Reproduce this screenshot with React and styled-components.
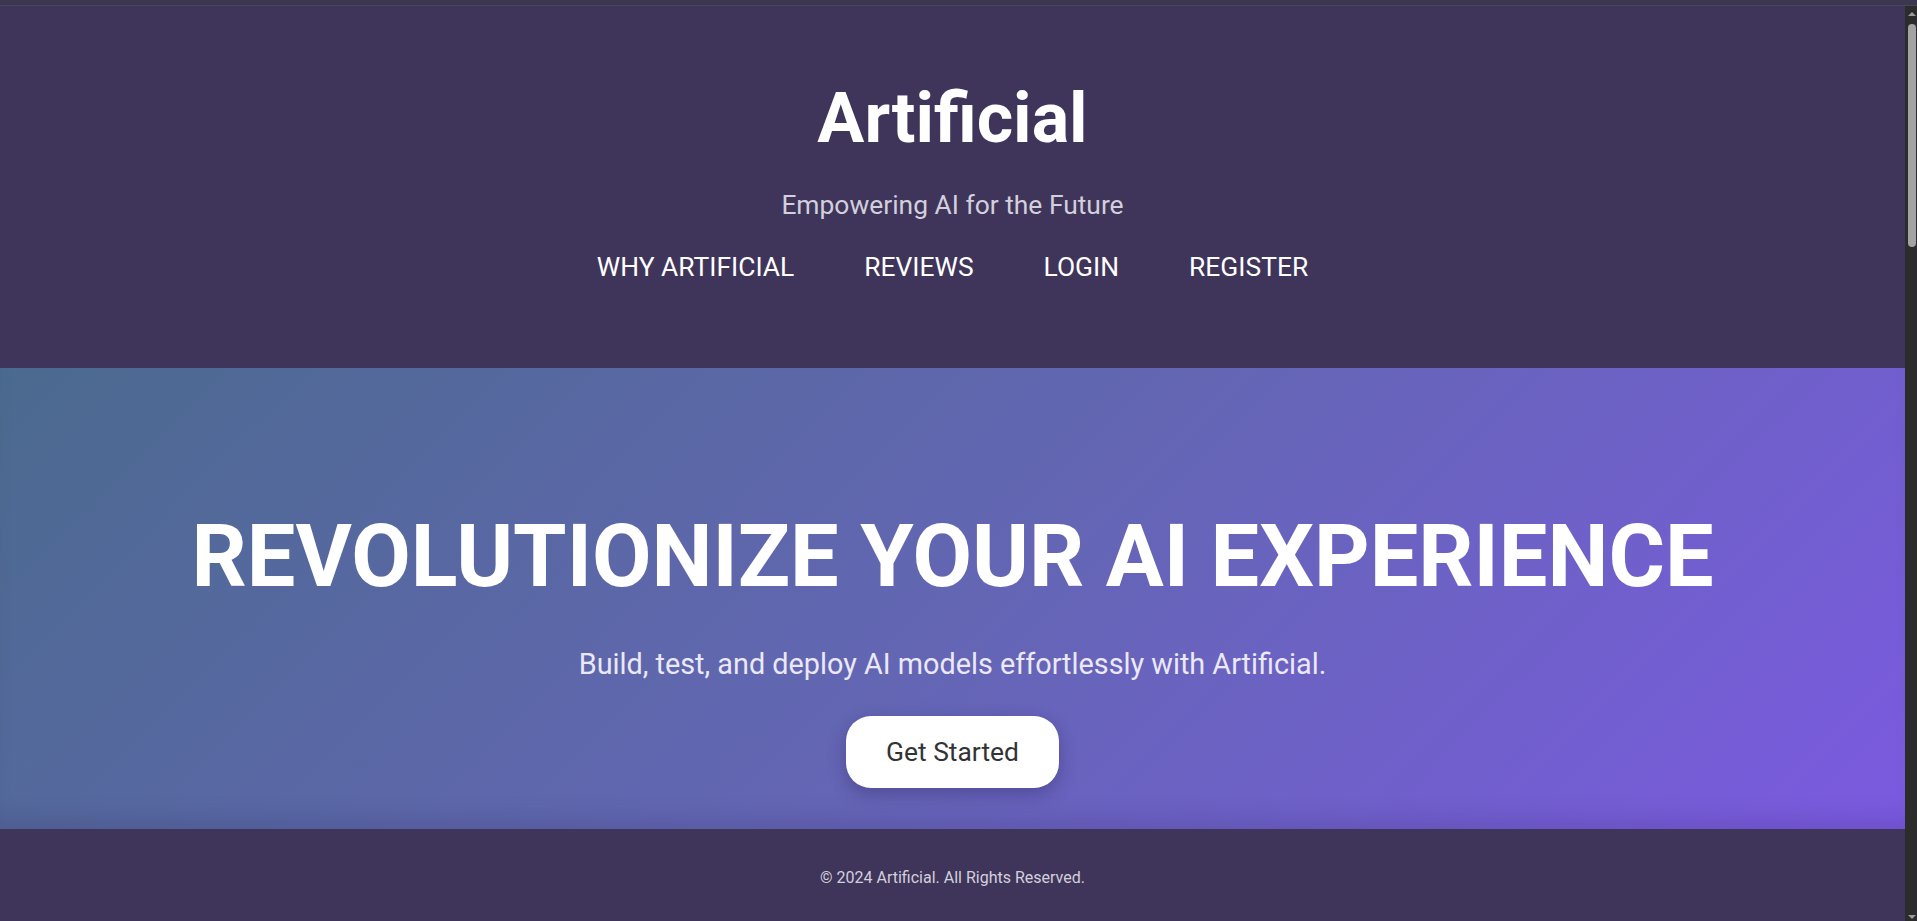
import React from "react";
import styled, { createGlobalStyle } from "styled-components";

const GlobalStyle = createGlobalStyle`
  html, body {
    margin: 0;
    padding: 0;
    height: 100%;
    overflow: hidden;
    background: #3f355b;
    font-family: Roboto, "Liberation Sans", sans-serif;
  }
  #root {
    height: 100%;
  }
`;

const Frame = styled.div`
  height: 100%;
  display: flex;
  flex-direction: column;
`;

const TopStrip = styled.div`
  height: 5px;
  flex-shrink: 0;
  background: #3a374e;
  border-bottom: 1px solid #4a4460;
`;

const Body = styled.div`
  flex: 1;
  min-height: 0;
  display: flex;
`;

const Page = styled.main`
  flex: 1;
  min-width: 0;
  overflow: hidden;
  background: #3f355b;
`;

/* drawn scrollbar on the right edge */
const ScrollRail = styled.div`
  width: 12px;
  flex-shrink: 0;
  background: #2c2c2c;
  display: flex;
  flex-direction: column;
  align-items: center;
  padding: 6px 1px 2px 3px;
  box-sizing: border-box;
`;

const Arrow = styled.span`
  width: 0;
  height: 0;
  border-left: 4px solid transparent;
  border-right: 4px solid transparent;
  ${(p) =>
    p.$down
      ? `border-top: 4px solid #9c9c9c; margin-top: auto;`
      : `border-bottom: 4px solid #9c9c9c;`}
`;

const Thumb = styled.span`
  width: 8px;
  height: 223px;
  margin-top: 8px;
  border-radius: 4px;
  background: #a3a3a3;
`;

const Header = styled.header`
  background: #3f355b;
  color: #fff;
  text-align: center;
  padding: 71px 0 85px;
`;

const Title = styled.h1`
  margin: 0;
  font-size: 70px;
  font-weight: 700;
  line-height: 82px;
`;

const Tagline = styled.p`
  margin: 31px 0 0;
  font-size: 26.4px;
  line-height: 30px;
  color: #d2d0dc;
`;

const Nav = styled.nav`
  display: flex;
  justify-content: center;
  margin-top: 32px;
`;

const NavLink = styled.a`
  font-size: 26.4px;
  line-height: 31px;
  color: #fff;
  text-decoration: none;
  text-transform: uppercase;
  margin: 0 35px;
  cursor: pointer;
`;

const Hero = styled.section`
  background: linear-gradient(135deg, #4b6a8f 0%, #6366b3 50%, #7b5ae0 100%);
  box-shadow: inset 0 -24px 30px -20px rgba(20, 10, 60, 0.18);
  color: #fff;
  text-align: center;
  padding: 138px 40px 41px;
`;

const HeroTitle = styled.h2`
  margin: 0;
  font-size: 86.4px;
  font-weight: 700;
  line-height: 101px;
`;

const HeroText = styled.p`
  margin: 40px 0 0;
  font-size: 28.8px;
  line-height: 34px;
  color: #ebe8f8;
`;

const CtaButton = styled.button`
  margin-top: 35px;
  width: 213px;
  height: 72px;
  border: none;
  border-radius: 25px;
  background: #fff;
  color: #333;
  font-family: inherit;
  font-size: 26.4px;
  cursor: pointer;
  box-shadow: 0 6px 18px rgba(30, 20, 70, 0.3);
`;

const Footer = styled.footer`
  background: #3f355b;
  color: #d3d0dc;
  text-align: center;
  font-size: 16px;
  line-height: 19px;
  padding: 39px 0 32px;
`;

export default function App() {
  return (
    <Frame>
      <GlobalStyle />
      <TopStrip />
      <Body>
        <Page>
          <Header>
            <Title>Artificial</Title>
            <Tagline>Empowering AI for the Future</Tagline>
            <Nav>
              <NavLink href="#why">Why Artificial</NavLink>
              <NavLink href="#reviews">Reviews</NavLink>
              <NavLink href="#login">Login</NavLink>
              <NavLink href="#register">Register</NavLink>
            </Nav>
          </Header>
          <Hero>
            <HeroTitle>REVOLUTIONIZE YOUR AI EXPERIENCE</HeroTitle>
            <HeroText>Build, test, and deploy AI models effortlessly with Artificial.</HeroText>
            <CtaButton>Get Started</CtaButton>
          </Hero>
          <Footer>© 2024 Artificial. All Rights Reserved.</Footer>
        </Page>
        <ScrollRail>
          <Arrow />
          <Thumb />
          <Arrow $down />
        </ScrollRail>
      </Body>
    </Frame>
  );
}
